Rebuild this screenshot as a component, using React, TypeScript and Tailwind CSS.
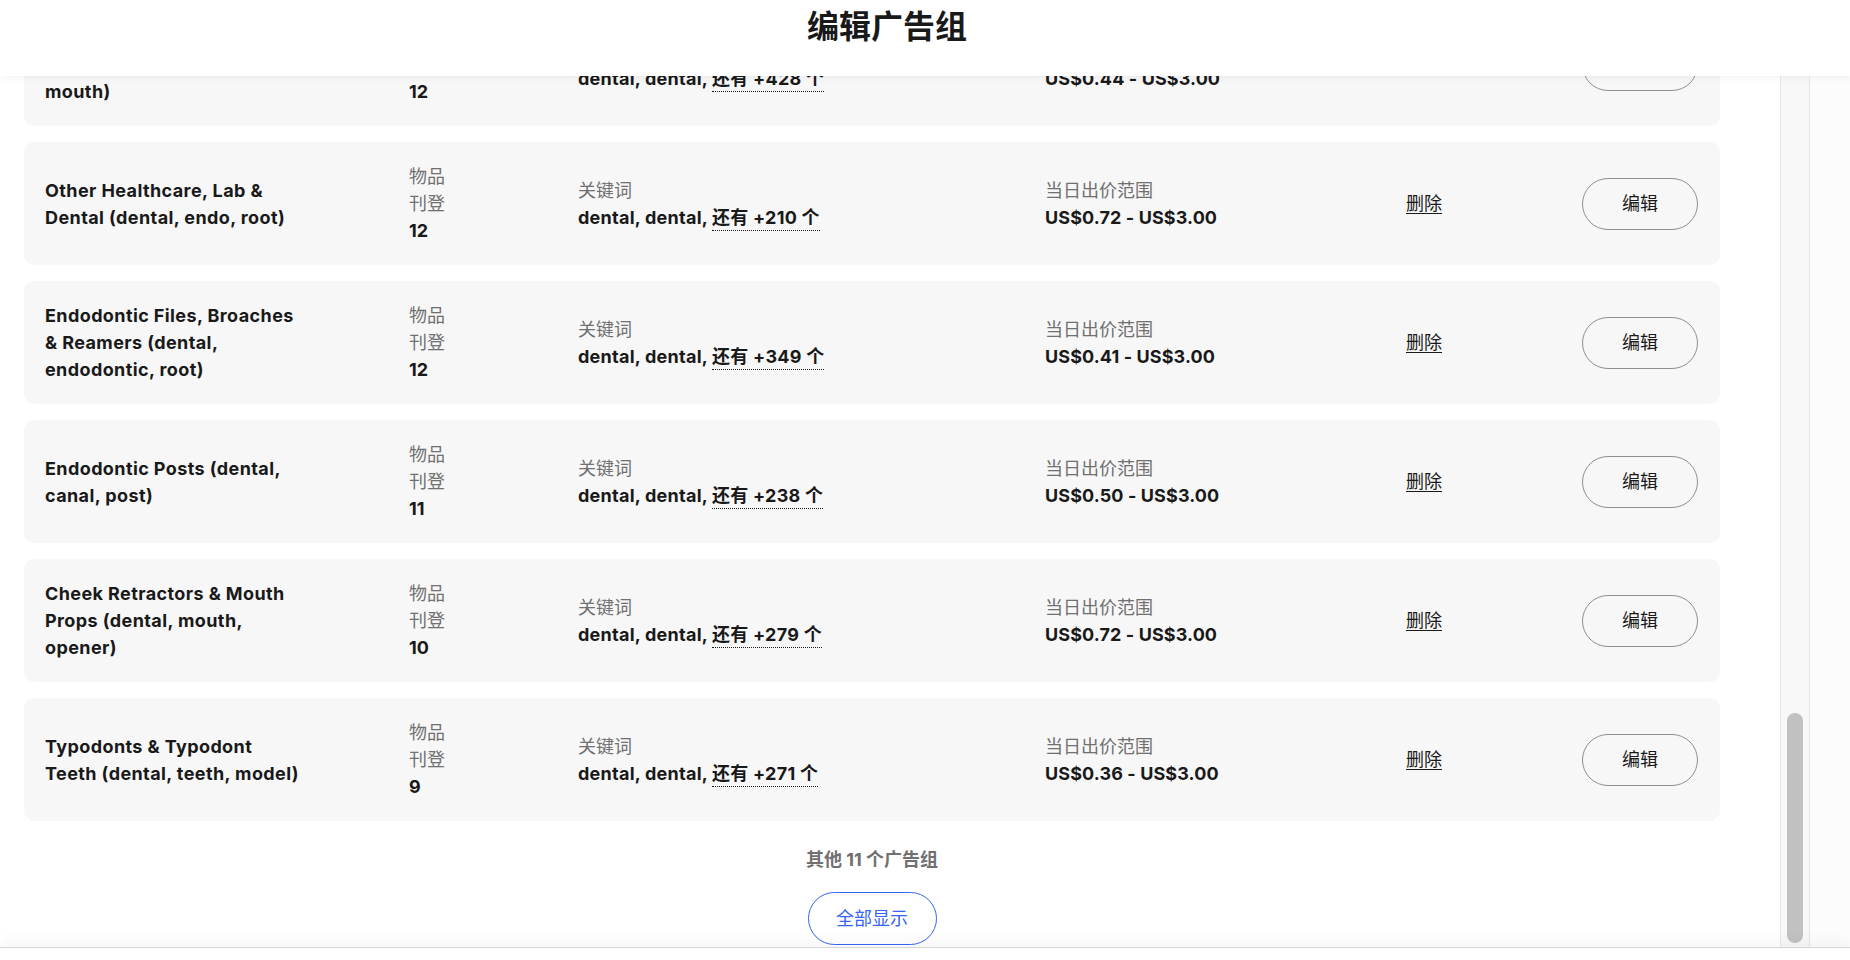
import React from "react";

type Group = {
  name: string[];
  items: number;
  more: string;
  bid: string;
};

const groups: Group[] = [
  {
    name: ["Dental Mirrors & Mouth", "Mirrors (dental, mirror,", "mouth)"],
    items: 12,
    more: "+428",
    bid: "US$0.44 - US$3.00",
  },
  {
    name: ["Other Healthcare, Lab &", "Dental (dental, endo, root)"],
    items: 12,
    more: "+210",
    bid: "US$0.72 - US$3.00",
  },
  {
    name: ["Endodontic Files, Broaches", "& Reamers (dental,", "endodontic, root)"],
    items: 12,
    more: "+349",
    bid: "US$0.41 - US$3.00",
  },
  {
    name: ["Endodontic Posts (dental,", "canal, post)"],
    items: 11,
    more: "+238",
    bid: "US$0.50 - US$3.00",
  },
  {
    name: ["Cheek Retractors & Mouth", "Props (dental, mouth,", "opener)"],
    items: 10,
    more: "+279",
    bid: "US$0.72 - US$3.00",
  },
  {
    name: ["Typodonts & Typodont", "Teeth (dental, teeth, model)"],
    items: 9,
    more: "+271",
    bid: "US$0.36 - US$3.00",
  },
];

function Card({ g }: { g: Group }) {
  return (
    <div className="grid grid-cols-[364px_169px_467px_361px_176px_116px] items-center rounded-[10px] bg-[#f7f7f7] pl-[21px] pr-[22px] py-[21px] text-[18px] leading-[27px]">
      <div className="font-bold tracking-[0.4px]">
        {g.name.map((l, i) => (
          <div key={i}>{l}</div>
        ))}
      </div>
      <div>
        <div className="text-[#707070]">物品</div>
        <div className="text-[#707070]">刊登</div>
        <div className="font-bold">{g.items}</div>
      </div>
      <div>
        <div className="text-[#707070]">关键词</div>
        <div className="font-bold whitespace-nowrap tracking-[0.25px]">
          dental, dental,{" "}
          <span className="border-b border-dotted border-[#191919] pb-[2px]">
            还有 {g.more} 个
          </span>
        </div>
      </div>
      <div>
        <div className="text-[#707070]">当日出价范围</div>
        <div className="font-bold whitespace-nowrap tracking-[0.1px]">{g.bid}</div>
      </div>
      <div>
        <span className="underline underline-offset-[3px]">删除</span>
      </div>
      <button className="h-[52px] w-[116px] rounded-full border border-[#8f8f8f] bg-transparent text-[18px] text-[#191919]">
        编辑
      </button>
    </div>
  );
}

export default function App() {
  return (
    <div className="flex h-[960px] w-[1850px] flex-col overflow-hidden bg-white font-['Inter','Noto_Sans_CJK_SC',sans-serif] text-[#191919]">
      <header className="relative z-10 flex h-[76px] shrink-0 justify-center bg-white pr-[76px] pt-[7px] shadow-[0_2px_8px_rgba(0,0,0,0.05)]">
        <h1 className="text-[32px] font-bold leading-[40px]">编辑广告组</h1>
      </header>
      <div className="flex min-h-0 flex-1">
        <div className="w-[1744px] shrink-0 overflow-hidden px-6">
          <div className="-mt-[73px] flex flex-col gap-4">
            {groups.map((g, i) => (
              <Card key={i} g={g} />
            ))}
          </div>
          <div className="mt-[25px] flex flex-col items-center">
            <p className="text-[18px] font-bold leading-[27px] text-[#707070]">其他 11 个广告组</p>
            <button className="mt-[19px] h-[53px] w-[129px] rounded-full border border-[#3665f3] bg-white text-[18px] text-[#3665f3]">
              全部显示
            </button>
          </div>
        </div>
        <div className="flex flex-1 bg-white pl-[36px]">
          <div className="flex w-[30px] flex-col items-center justify-end border-x border-[#e6e6e6] bg-[#f8f8f8] pb-[4px]">
            <div className="h-[230px] w-[16px] rounded-full bg-[#c1c1c1]" />
          </div>
          <div className="flex-1 bg-[#fcfcfc]" />
        </div>
      </div>
      <footer className="relative z-10 h-[13px] shrink-0 border-t border-[#d4d4d4] bg-white shadow-[0_-6px_14px_rgba(0,0,0,0.04)]" />
    </div>
  );
}
